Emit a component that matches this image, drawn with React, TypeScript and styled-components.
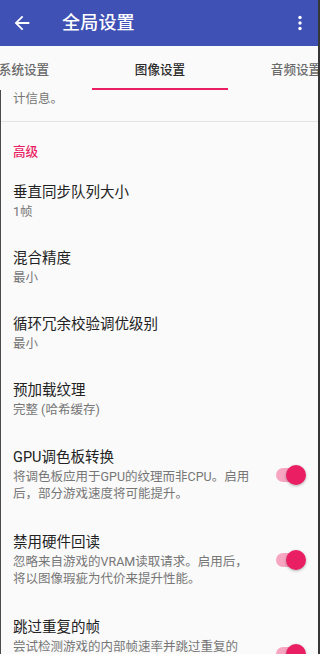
import React from 'react';
import styled, { createGlobalStyle } from 'styled-components';

const GlobalStyle = createGlobalStyle`
  html, body {
    margin: 0;
    padding: 0;
    background: #fafafa;
  }
  body {
    font-family: Roboto, "Noto Sans CJK SC", sans-serif;
    -webkit-font-smoothing: antialiased;
  }
`;

const PINK = '#e91e63';

const Screen = styled.div`
  width: 320px;
  height: 654px;
  box-sizing: border-box;
  border-right: 2px solid #363636;
  background: #fafafa;
  overflow: hidden;
  display: flex;
  flex-direction: column;
`;

const AppBar = styled.header`
  height: 46px;
  flex: 0 0 46px;
  background: #3f51b5;
  display: flex;
  align-items: center;
  padding: 0 6px 0 11px;
  color: #fff;
`;

const BarTitle = styled.h1`
  margin: 0 0 0 29px;
  flex: 1;
  font-size: 18px;
  font-weight: 500;
  letter-spacing: 0.2px;
  line-height: 24px;
`;

const IconButton = styled.span`
  display: flex;
  align-items: center;
  justify-content: center;
`;

const TabBar = styled.nav`
  height: 44px;
  flex: 0 0 44px;
  display: flex;
  overflow: hidden;
  background: #fafafa;
`;

const TabTrack = styled.div`
  display: flex;
  margin-left: -44px;
`;

const Tab = styled.div<{ $active?: boolean }>`
  position: relative;
  width: 136px;
  flex: 0 0 136px;
  display: flex;
  align-items: center;
  justify-content: center;
  box-sizing: border-box;
  font-size: 12.6px;
  font-weight: 500;
  color: ${(p) => (p.$active ? '#2b2b2b' : '#6a6a6a')};

  &::after {
    content: '';
    position: absolute;
    left: 0;
    right: 0;
    bottom: 0;
    height: 2px;
    background: ${(p) => (p.$active ? PINK : 'transparent')};
  }
`;

const Content = styled.main`
  flex: 1;
  border-left: 1px solid #4a4a4a;
  overflow: hidden;
`;

const Tail = styled.div`
  padding: 0 12px 14px;
  font-size: 12.5px;
  line-height: 17px;
  color: #767676;
`;

const Divider = styled.hr`
  margin: 0;
  border: 0;
  height: 1px;
  background: #e3e3e3;
`;

const Category = styled.div`
  padding: 21px 12px 7px;
  font-size: 12.6px;
  line-height: 18px;
  font-weight: 500;
  color: ${PINK};
`;

const Item = styled.div<{ $toggle?: boolean }>`
  display: flex;
  align-items: center;
  padding: ${(p) => (p.$toggle ? '16px 12px 15px 12px' : '15px 12px 14px 12px')};
`;

const TextBlock = styled.div<{ $narrow?: boolean }>`
  flex: ${(p) => (p.$narrow ? '0 1 241px' : '1')};
  min-width: 0;
`;

const Title = styled.div`
  font-size: 14.5px;
  line-height: 20px;
  color: #222;
`;

const Summary = styled.div`
  font-size: 12.5px;
  line-height: 17px;
  color: #767676;
`;

const SwitchWrap = styled.div`
  margin-left: auto;
  position: relative;
  width: 30px;
  height: 20px;
  flex: 0 0 30px;
`;

const SwitchTrack = styled.div`
  position: absolute;
  left: 0;
  right: 2px;
  top: 3px;
  height: 14px;
  border-radius: 7px;
  background: #f7a6c2;
`;

const SwitchThumb = styled.div`
  position: absolute;
  right: 0;
  top: 0;
  width: 20px;
  height: 20px;
  border-radius: 50%;
  background: ${PINK};
  box-shadow: 0 1px 3px rgba(0, 0, 0, 0.3);
`;

const Switch = () => (
  <SwitchWrap>
    <SwitchTrack />
    <SwitchThumb />
  </SwitchWrap>
);

type Pref = { title: string; summary: string; toggle?: boolean };

const prefs: Pref[] = [
  { title: '垂直同步队列大小', summary: '1帧' },
  { title: '混合精度', summary: '最小' },
  { title: '循环冗余校验调优级别', summary: '最小' },
  { title: '预加载纹理', summary: '完整 (哈希缓存)' },
  {
    title: 'GPU调色板转换',
    summary: '将调色板应用于GPU的纹理而非CPU。启用后，部分游戏速度将可能提升。',
    toggle: true,
  },
  {
    title: '禁用硬件回读',
    summary: '忽略来自游戏的VRAM读取请求。启用后，将以图像瑕疵为代价来提升性能。',
    toggle: true,
  },
  {
    title: '跳过重复的帧',
    summary: '尝试检测游戏的内部帧速率并跳过重复的帧。启用后，在部分游戏(驱动上，游戏率将会有所提升。',
    toggle: true,
  },
];

export default function App() {
  return (
    <>
      <GlobalStyle />
      <Screen>
        <AppBar>
          <IconButton>
            <svg width="22" height="22" viewBox="0 0 24 24" fill="#fff">
              <path d="M20 11H7.83l5.59-5.59L12 4l-8 8 8 8 1.41-1.41L7.83 13H20v-2z" />
            </svg>
          </IconButton>
          <BarTitle>全局设置</BarTitle>
          <IconButton>
            <svg width="24" height="24" viewBox="0 0 24 24" fill="#fff">
              <circle cx="12" cy="6.5" r="1.7" />
              <circle cx="12" cy="12" r="1.7" />
              <circle cx="12" cy="17.5" r="1.7" />
            </svg>
          </IconButton>
        </AppBar>
        <TabBar>
          <TabTrack>
            <Tab>系统设置</Tab>
            <Tab $active>图像设置</Tab>
            <Tab>音频设置</Tab>
          </TabTrack>
        </TabBar>
        <Content>
          <Tail>计信息。</Tail>
          <Divider />
          <Category>高级</Category>
          {prefs.map((p) => (
            <Item key={p.title} $toggle={p.toggle}>
              <TextBlock $narrow={p.toggle}>
                <Title>{p.title}</Title>
                <Summary>{p.summary}</Summary>
              </TextBlock>
              {p.toggle && <Switch />}
            </Item>
          ))}
        </Content>
      </Screen>
    </>
  );
}
